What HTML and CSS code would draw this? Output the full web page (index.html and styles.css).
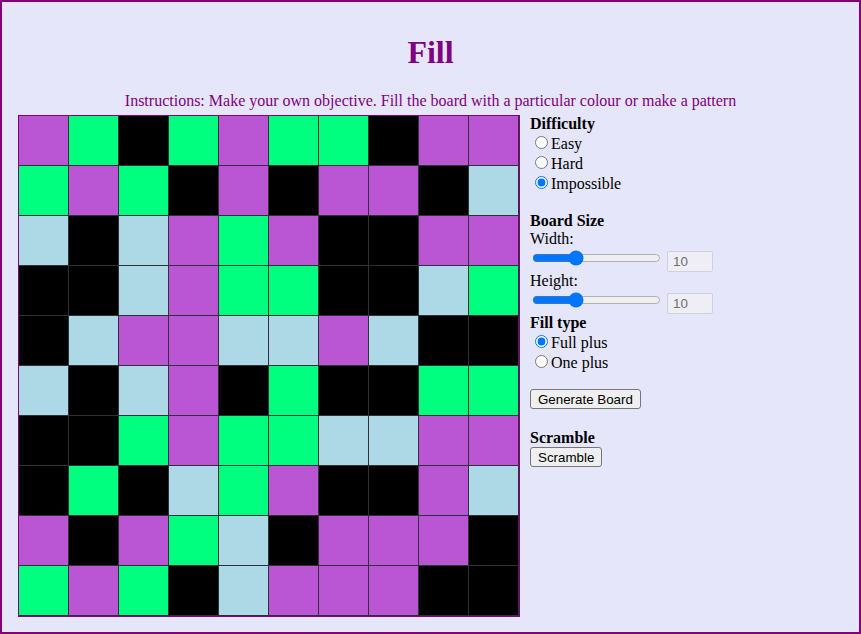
FILE: index.html
```html
<!DOCTYPE html>
<html lang="en">
<head>
<meta charset="utf-8">
<title>Fill</title>
<link rel="stylesheet" href="styles.css">
</head>
<body>
<div class="page">
  <h1 class="title">Fill</h1>
  <p class="instructions">Instructions: Make your own objective. Fill the board with a particular colour or make a pattern</p>
  <div class="main">
    <div class="board">
      <div class="cell p"></div><div class="cell g"></div><div class="cell k"></div><div class="cell g"></div><div class="cell p"></div><div class="cell g"></div><div class="cell g"></div><div class="cell k"></div><div class="cell p"></div><div class="cell p"></div>
      <div class="cell g"></div><div class="cell p"></div><div class="cell g"></div><div class="cell k"></div><div class="cell p"></div><div class="cell k"></div><div class="cell p"></div><div class="cell p"></div><div class="cell k"></div><div class="cell b"></div>
      <div class="cell b"></div><div class="cell k"></div><div class="cell b"></div><div class="cell p"></div><div class="cell g"></div><div class="cell p"></div><div class="cell k"></div><div class="cell k"></div><div class="cell p"></div><div class="cell p"></div>
      <div class="cell k"></div><div class="cell k"></div><div class="cell b"></div><div class="cell p"></div><div class="cell g"></div><div class="cell g"></div><div class="cell k"></div><div class="cell k"></div><div class="cell b"></div><div class="cell g"></div>
      <div class="cell k"></div><div class="cell b"></div><div class="cell p"></div><div class="cell p"></div><div class="cell b"></div><div class="cell b"></div><div class="cell p"></div><div class="cell b"></div><div class="cell k"></div><div class="cell k"></div>
      <div class="cell b"></div><div class="cell k"></div><div class="cell b"></div><div class="cell p"></div><div class="cell k"></div><div class="cell g"></div><div class="cell k"></div><div class="cell k"></div><div class="cell g"></div><div class="cell g"></div>
      <div class="cell k"></div><div class="cell k"></div><div class="cell g"></div><div class="cell p"></div><div class="cell g"></div><div class="cell g"></div><div class="cell b"></div><div class="cell b"></div><div class="cell p"></div><div class="cell p"></div>
      <div class="cell k"></div><div class="cell g"></div><div class="cell k"></div><div class="cell b"></div><div class="cell g"></div><div class="cell p"></div><div class="cell k"></div><div class="cell k"></div><div class="cell p"></div><div class="cell b"></div>
      <div class="cell p"></div><div class="cell k"></div><div class="cell p"></div><div class="cell g"></div><div class="cell b"></div><div class="cell k"></div><div class="cell p"></div><div class="cell p"></div><div class="cell p"></div><div class="cell k"></div>
      <div class="cell g"></div><div class="cell p"></div><div class="cell g"></div><div class="cell k"></div><div class="cell b"></div><div class="cell p"></div><div class="cell p"></div><div class="cell p"></div><div class="cell k"></div><div class="cell k"></div>
    </div>
    <div class="controls">
      <div class="section difficulty">
        <b>Difficulty</b><br>
        <input type="radio" name="difficulty" class="radio">Easy<br>
        <input type="radio" name="difficulty" class="radio">Hard<br>
        <input type="radio" name="difficulty" class="radio" checked>Impossible
      </div>
      <div class="section board-size">
        <div><b>Board Size</b></div>
        <div>Width:</div>
        <div class="slider-row">
          <input type="range" class="slider" min="3" max="25" value="10">
          <input type="text" class="num" value="10" disabled>
        </div>
        <div>Height:</div>
        <div class="slider-row">
          <input type="range" class="slider" min="3" max="25" value="10">
          <input type="text" class="num" value="10" disabled>
        </div>
      </div>
      <div class="section fill-type">
        <b>Fill type</b><br>
        <input type="radio" name="filltype" class="radio" checked>Full plus<br>
        <input type="radio" name="filltype" class="radio">One plus
      </div>
      <div class="section generate">
        <button type="button" class="btn">Generate Board</button>
      </div>
      <div class="section scramble">
        <div><b>Scramble</b></div>
        <div class="btn-row"><button type="button" class="btn">Scramble</button></div>
      </div>
    </div>
  </div>
</div>
</body>
</html>
```

FILE: styles.css
```css
html, body {
  margin: 0;
  padding: 0;
}

body {
  font-family: "Liberation Serif", "Times New Roman", serif;
  font-size: 16px;
}

.page {
  box-sizing: border-box;
  width: 861px;
  height: 634px;
  border: 2px solid #800080;
  background: #e6e6fa;
  padding: 10px 8px 0 8px;
}

.title {
  margin: 22px 0 21px;
  font-size: 32px;
  font-weight: bold;
  color: #800080;
  text-align: center;
}

.instructions {
  margin: 0;
  color: #800080;
  text-align: center;
}

.main {
  display: flex;
  align-items: flex-start;
  gap: 10px;
  margin-top: 5px;
  margin-left: 8px;
}

.board {
  display: grid;
  grid-template-columns: repeat(10, 50px);
  grid-auto-rows: 50px;
  border: 1px solid #800080;
}

.cell {
  box-sizing: border-box;
  border-right: 1px solid #2f3136;
  border-bottom: 1px solid #2f3136;
}

.p { background: #ba55d3; }
.g { background: #00ff7f; }
.k { background: #000000; }
.b { background: #add8e6; }

.controls {
  color: #000;
}

.difficulty {
  margin-bottom: 19px;
}

.fill-type {
  margin-bottom: 17px;
}

.generate {
  display: flex;
  margin-bottom: 20px;
}

.btn-row {
  display: flex;
}

.radio {
  margin: 3px 3px 0 5px;
}

.slider-row {
  display: flex;
  align-items: flex-start;
  height: 24px;
}

.slider {
  width: 129px;
  height: 16px;
  margin: 2px 6px 0 2px;
}

.num {
  box-sizing: border-box;
  width: 46px;
  height: 21px;
  margin-top: 3px;
  padding: 1px 5px;
  border: 1px solid #d2d1d8;
  border-radius: 2px;
  background: #efeef6;
  color: #6d6d6d;
  font-family: "Liberation Sans", Arial, sans-serif;
  font-size: 13.33px;
}

.btn {
  box-sizing: border-box;
  font-family: "Liberation Sans", Arial, sans-serif;
  font-size: 13.33px;
  color: #000;
  background: #efefef;
  border: 1px solid #767676;
  border-radius: 3px;
  padding: 1px 7px;
  height: 20px;
}
```
